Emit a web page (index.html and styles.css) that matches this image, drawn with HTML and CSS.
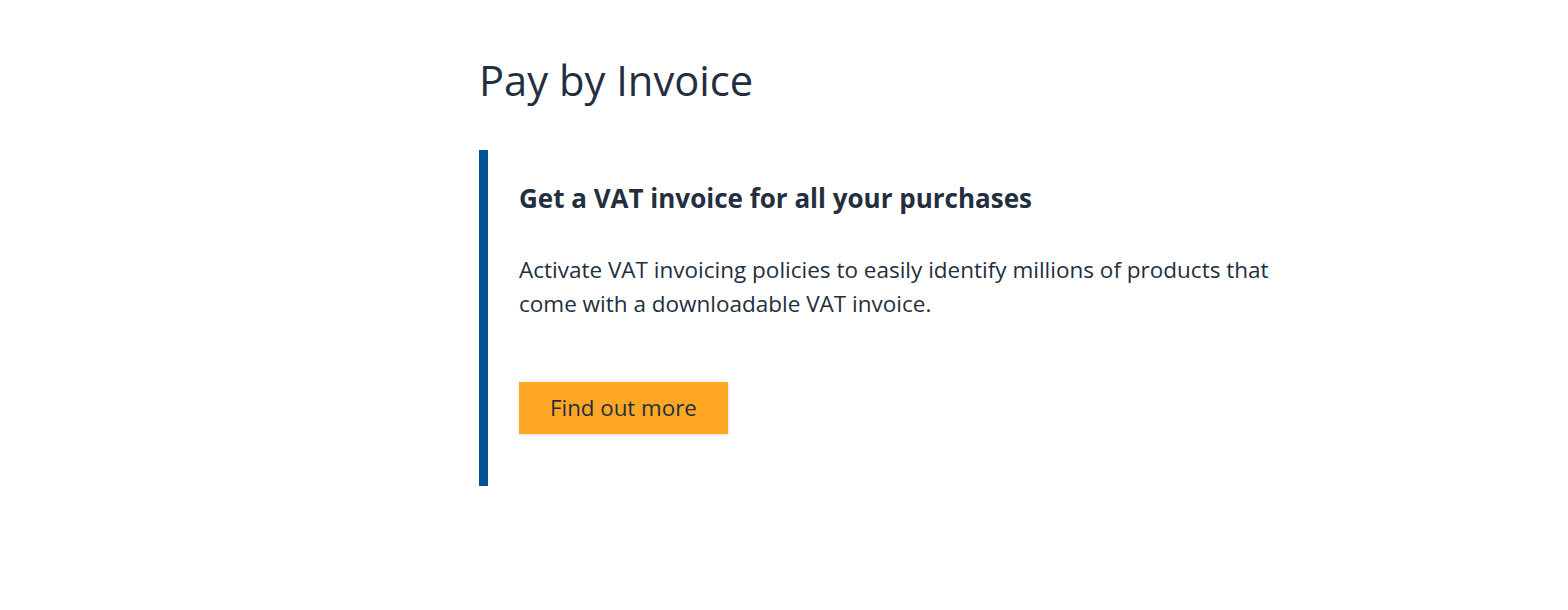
FILE: index.html
```html
<!DOCTYPE html>
<html lang="en">
<head>
<meta charset="utf-8">
<title>Pay by Invoice</title>
<link rel="stylesheet" href="styles.css">
</head>
<body>
<main class="page">
  <h1 class="title">Pay by Invoice</h1>
  <section class="callout">
    <h2 class="callout-heading">Get a VAT invoice for all your purchases</h2>
    <p class="callout-text">Activate VAT invoicing policies to easily identify millions of products that come with a downloadable VAT invoice.</p>
    <a class="btn" href="#">Find out more</a>
  </section>
</main>
</body>
</html>
```
FILE: styles.css
```css
html, body {
  margin: 0;
  padding: 0;
  background: #ffffff;
}
body {
  font-family: "Open Sans", "Liberation Sans", sans-serif;
  color: #232f3e;
}
.page {
  padding: 54px 0 0 479px;
}
.title {
  margin: 0;
  font-size: 41.7px;
  font-weight: 400;
  line-height: 52px;
  color: #232f3e;
}
.callout {
  margin-top: 44px;
  border-left: 9px solid #005496;
  padding: 32px 0 52px 31px;
  width: 840px;
  box-sizing: border-box;
}
.callout-heading {
  margin: 0;
  font-size: 26px;
  font-weight: 700;
  line-height: 32px;
}
.callout-text {
  margin: 39px 0 0;
  font-size: 22.5px;
  line-height: 34px;
  max-width: 775px;
}
.btn {
  display: inline-block;
  margin-top: 61px;
  background: #ffa724;
  color: #232f3e;
  text-decoration: none;
  font-size: 22.3px;
  line-height: 52px;
  padding: 0 31px;
  box-shadow: 0 1px 3px rgba(0,0,0,0.15);
}
```
